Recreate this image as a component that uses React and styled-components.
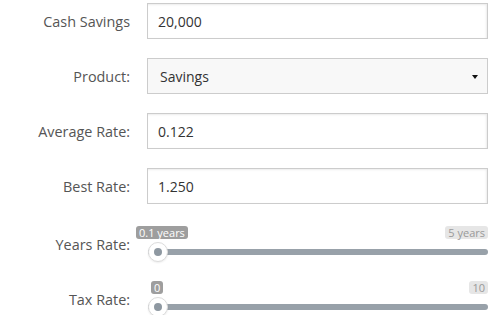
import React from "react";
import styled, { createGlobalStyle } from "styled-components";

const Global = createGlobalStyle`
  body {
    margin: 0;
    background: #fff;
    font-family: "Open Sans", "Liberation Sans", sans-serif;
    font-size: 14px;
    color: #555;
  }
`;

const Form = styled.form`
  display: flex;
  flex-direction: column;
  padding-top: 3px;
  width: 488px;
`;

const Row = styled.div`
  display: grid;
  grid-template-columns: 130px 341px;
  column-gap: 17px;
  align-items: center;
  margin-top: ${({ $top }) => $top || 0}px;
`;

const Label = styled.label`
  text-align: right;
  color: #555;
  font-size: 14.4px;
`;

const Input = styled.input`
  box-sizing: border-box;
  height: 36px;
  width: 100%;
  border: 1px solid #ccc;
  border-radius: 0;
  padding: 0 10px;
  font-family: inherit;
  font-size: 14px;
  color: #333;
  background: #fff;
  box-shadow: inset -1px 1px 2px rgba(0, 0, 0, 0.08);
  outline: none;
`;

const Select = styled.div`
  box-sizing: border-box;
  position: relative;
  height: 36px;
  border: 1px solid #ccc;
  background: #f8f8f8;
  padding: 0 12px;
  display: flex;
  align-items: center;
  color: #333;
  font-size: 14px;
`;

const Caret = styled.span`
  position: absolute;
  right: 9px;
  top: 16px;
  width: 0;
  height: 0;
  border-top: 4px solid #111;
  border-left: 3px solid transparent;
  border-right: 3px solid transparent;
`;

const Slider = styled.div`
  position: relative;
  height: 36px;
`;

const Tags = styled.div`
  display: flex;
  justify-content: space-between;
  height: 13px;
`;

const Tag = styled.span`
  height: 13px;
  line-height: 13px;
  font-size: 11px;
  padding: 0 3px;
  border-radius: 3px;
  background: ${({ $dark }) => ($dark ? "#9e9e9e" : "#e6e6e6")};
  color: ${({ $dark }) => ($dark ? "#fff" : "#999")};
  transform: ${({ $shift }) => ($shift ? `translateX(${$shift}px)` : "none")};
`;

const Track = styled.div`
  position: absolute;
  left: 1px;
  right: 0;
  top: 23px;
  height: 6px;
  border-radius: 3px;
  background: #98a1a9;
`;

const Handle = styled.span`
  position: absolute;
  left: 1px;
  top: 16px;
  box-sizing: border-box;
  width: 20px;
  height: 20px;
  border-radius: 50%;
  background: #fff;
  border: 1px solid #dcdcdc;
  box-shadow: 0 1px 2px rgba(0, 0, 0, 0.08);
  display: flex;
  align-items: center;
  justify-content: center;

  &::after {
    content: "";
    width: 8px;
    height: 8px;
    border-radius: 50%;
    background: #8e98a1;
  }
`;

const Range = ({ min, max, shift }) => (
  <Slider>
    <Tags>
      <Tag $dark $shift={shift}>{min}</Tag>
      <Tag>{max}</Tag>
    </Tags>
    <Track />
    <Handle />
  </Slider>
);

const App = () => (
  <>
    <Global />
    <Form>
      <Row>
        <Label>Cash Savings</Label>
        <Input defaultValue="20,000" />
      </Row>
      <Row $top={19}>
        <Label>Product:</Label>
        <Select>
          Savings
          <Caret />
        </Select>
      </Row>
      <Row $top={19}>
        <Label>Average Rate:</Label>
        <Input defaultValue="0.122" />
      </Row>
      <Row $top={19}>
        <Label>Best Rate:</Label>
        <Input defaultValue="1.250" />
      </Row>
      <Row $top={22}>
        <Label>Years Rate:</Label>
        <Range min="0.1 years" max="5 years" shift={-11} />
      </Row>
      <Row $top={19}>
        <Label>Tax Rate:</Label>
        <Range min="0" max="10" shift={4} />
      </Row>
    </Form>
  </>
);

export default App;
